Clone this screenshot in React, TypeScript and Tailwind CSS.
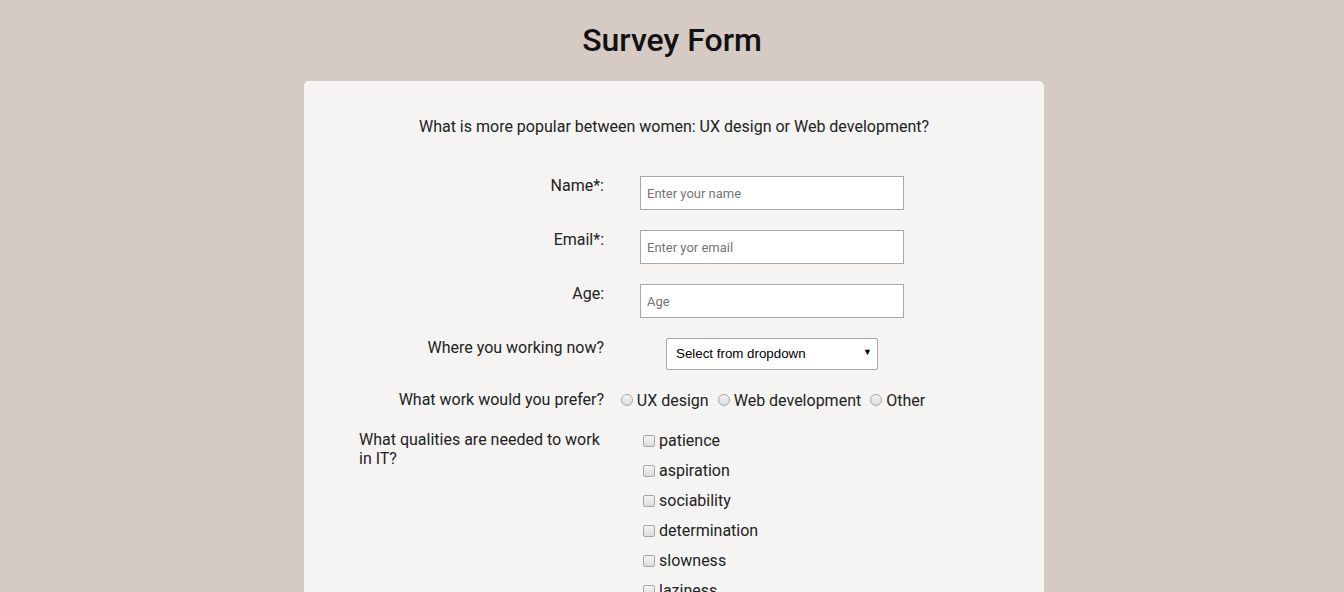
import React from "react";

const font = { fontFamily: "Roboto, 'Liberation Sans', Arial, sans-serif" };

function Radio({ label }: { label: string }) {
  return (
    <label className="inline-flex items-center">
      <span className="mr-[4px] inline-block h-[12px] w-[12px] rounded-full border border-[#a6a6a6] bg-gradient-to-b from-[#f4f4f4] to-[#dcdcdc]" />
      <span>{label}</span>
    </label>
  );
}

function Check({ label }: { label: string }) {
  return (
    <li className="mb-[11px] flex items-center leading-[19px]">
      <span className="mr-[4px] inline-block h-[12px] w-[12px] rounded-[2px] border border-[#a6a6a6] bg-gradient-to-b from-[#f4f4f4] to-[#dcdcdc]" />
      <span>{label}</span>
    </li>
  );
}

function Row({ label, children, className = "" }: { label: string; children: React.ReactNode; className?: string }) {
  return (
    <div className={`flex items-start ${className}`}>
      <div className="ml-[55px] w-[246px] pr-[1px] text-right leading-[19px]">{label}</div>
      <div className="ml-[8px] w-[318px] text-center">{children}</div>
    </div>
  );
}

const inputCls =
  "h-[34px] w-[264px] border border-[#a9a9a9] bg-white px-[6px] text-[13px] outline-none placeholder:text-[#757575]";

export default function App() {
  const qualities = ["patience", "aspiration", "sociability", "determination", "slowness", "laziness"];

  return (
    <div className="min-h-[592px] bg-[#d6cac5] text-[16px] text-[#222]" style={font}>
      <header className="flex h-[81px] items-center justify-center pb-[1px]">
        <h1 className="text-[32px] font-medium leading-[40px] text-[#111]">Survey Form</h1>
      </header>

      <div className="mx-auto w-[744px] pl-[4px]">
        <form className="w-[740px] rounded-[5px] bg-[#f5f4f2] pb-10 pt-[36px]">
          <p className="mb-[40px] text-center leading-[19px]">
            What is more popular between women: UX design or Web development?
          </p>

          <Row label="Name*:" className="mb-[20px]">
            <input type="text" placeholder="Enter your name" className={inputCls} />
          </Row>
          <Row label="Email*:" className="mb-[20px]">
            <input type="email" placeholder="Enter yor email" className={inputCls} />
          </Row>
          <Row label="Age:" className="mb-[20px]">
            <input type="number" placeholder="Age" className={inputCls} />
          </Row>
          <Row label="Where you working now?" className="mb-[20px]">
            <div className="relative inline-block">
              <select
                className="h-[32px] w-[212px] appearance-none rounded-[2px] border border-[#a9a9a9] bg-white pl-[9px] text-[13.33px] text-black outline-none"
                style={{ fontFamily: "'Liberation Sans', Arial, sans-serif" }}
                defaultValue=""
              >
                <option value="">Select from dropdown</option>
                <option>Company</option>
                <option>Freelance</option>
              </select>
              <span className="pointer-events-none absolute right-[6px] top-[8px] text-[9px] text-black">▼</span>
            </div>
          </Row>
          <Row label="What work would you prefer?" className="mb-[20px]">
            <div className="flex h-[20px] items-center justify-center gap-[9px] pl-[2px] leading-[19px]">
              <Radio label="UX design" />
              <Radio label="Web development" />
              <Radio label="Other" />
            </div>
          </Row>

          <div className="flex items-start">
            <div className="ml-[55px] w-[246px] text-left leading-[19px]">
              What qualities are needed to work in IT?
            </div>
            <ul className="ml-[38px] mt-[1px] text-left">
              {qualities.map((q) => (
                <Check key={q} label={q} />
              ))}
            </ul>
          </div>
        </form>
      </div>
    </div>
  );
}
